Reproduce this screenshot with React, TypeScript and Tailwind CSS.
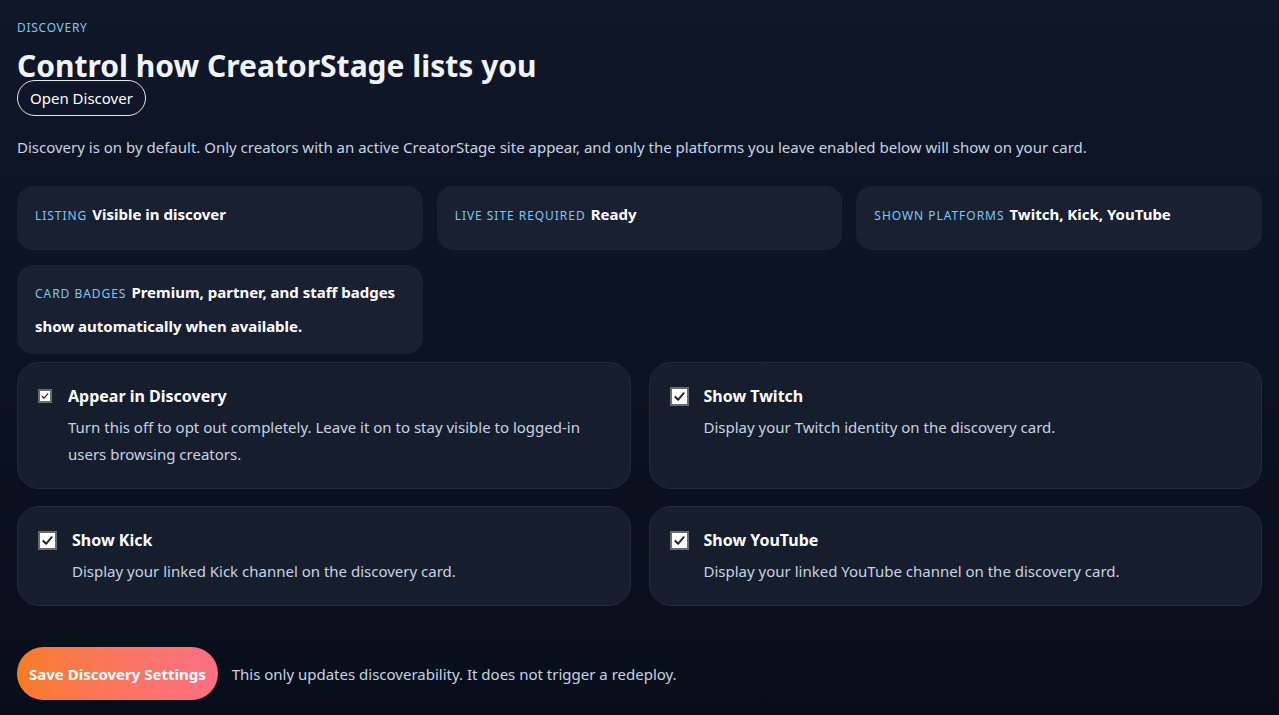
import React from "react";

const font = { fontFamily: '"Noto Sans", "Open Sans", sans-serif' };

function Check({ size }: { size: "sm" | "lg" }) {
  const cls =
    size === "sm"
      ? "w-[14px] h-[14px] border-2"
      : "w-[19px] h-[19px] border-[2px]";
  return (
    <div className={`${cls} shrink-0 border-[#6b6b6b] bg-white flex items-center justify-center`}>
      <svg viewBox="0 0 16 16" className="w-full h-full" fill="none">
        <path d="M3.5 8.5 L6.5 11.5 L12.5 4.5" stroke="#1f1f1f" strokeWidth="2" strokeLinecap="round" strokeLinejoin="round" />
      </svg>
    </div>
  );
}

function Stat({ label, value, className = "" }: { label: string; value: string; className?: string }) {
  return (
    <div className={`rounded-[16px] bg-[#182031] px-[18px] leading-[32px] ${className}`}>
      <span className="text-[12px] tracking-[0.08em] uppercase text-[#7dc8f4] mr-[5px]">{label}</span>
      <span className="text-[15px] font-bold text-white">{value}</span>
    </div>
  );
}

function Toggle({ title, desc, size }: { title: string; desc: string; size: "sm" | "lg" }) {
  return (
    <div className="rounded-[22px] border border-[#232b3b] bg-[#161d2c] px-[20px] pt-[21px] pb-[20px]">
      <div className={`flex items-center ${size === "sm" ? "gap-[16px]" : "gap-[15px]"}`}>
        <Check size={size} />
        <div className="text-[16px] font-bold text-white">{title}</div>
      </div>
      <div className={`mt-[6px] text-[15px] leading-[27px] text-[#c9d3e3] ${size === "sm" ? "pl-[30px]" : "pl-[34px]"}`}>{desc}</div>
    </div>
  );
}

export default function App() {
  return (
    <div
      style={font}
      className="min-h-[715px] w-full bg-gradient-to-b from-[#0f1729] to-[#080e19] px-[17px] pt-[20px] pb-[15px] text-white"
    >
      <div className="text-[12px] tracking-[0.06em] text-[#7dc8f4] leading-[16px]">DISCOVERY</div>
      <h1 className="mt-[10px] text-[30px] font-bold leading-[40px] text-[#f1f5fb]">Control how CreatorStage lists you</h1>
      <button className="mt-[-6px] rounded-full border border-[#e5e7eb] px-[12px] h-[36px] text-[15px] text-white">
        Open Discover
      </button>
      <p className="mt-[19px] text-[15px] leading-[24px] text-[#c9d3e3]">
        Discovery is on by default. Only creators with an active CreatorStage site appear, and only the platforms you leave enabled below will show on your card.
      </p>
      <div className="mt-[27px] grid grid-cols-3 gap-x-[14px] gap-y-[15px]">
        <Stat label="Listing" value="Visible in discover" className="pt-[12px] pb-[18px]" />
        <Stat label="Live site required" value="Ready" className="pt-[12px] pb-[18px]" />
        <Stat label="Shown platforms" value="Twitch, Kick, YouTube" className="pt-[12px] pb-[18px]" />
        <Stat label="Card badges" value="Premium, partner, and staff badges show automatically when available." className="pt-[11px] pb-[12px]" />
      </div>
      <div className="mt-[8px] grid grid-cols-2 gap-x-[18px] gap-y-[17px]">
        <Toggle size="sm" title="Appear in Discovery" desc="Turn this off to opt out completely. Leave it on to stay visible to logged-in users browsing creators." />
        <Toggle size="lg" title="Show Twitch" desc="Display your Twitch identity on the discovery card." />
        <Toggle size="lg" title="Show Kick" desc="Display your linked Kick channel on the discovery card." />
        <Toggle size="lg" title="Show YouTube" desc="Display your linked YouTube channel on the discovery card." />
      </div>
      <div className="mt-[41px] flex items-center gap-[14px]">
        <button className="h-[53px] rounded-full bg-gradient-to-r from-[#f97b22] to-[#fb6f84] px-[12px] text-[15px] font-bold text-white">
          Save Discovery Settings
        </button>
        <span className="text-[15px] text-[#c9d3e3]">This only updates discoverability. It does not trigger a redeploy.</span>
      </div>
    </div>
  );
}
